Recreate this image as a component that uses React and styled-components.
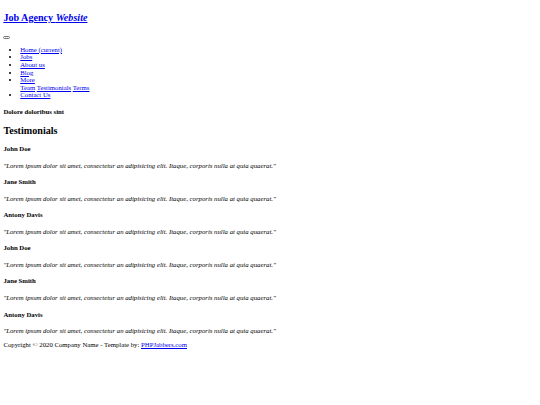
import styled, { createGlobalStyle } from "styled-components";

// the reference is a plain, unstyled page shot at 540/1280 scale
const GlobalStyle = createGlobalStyle`
  html, body {
    background: #fff;
  }
  body {
    margin: 3.375px;
    font-family: "Liberation Serif", "Times New Roman", serif;
    font-size: 6.75px;
    line-height: 1.125;
    color: #000;
  }
  a {
    color: #0000ee;
  }
`;

const Nav = styled.nav``;

const Brand = styled.a`
  display: block;
  color: #0000ee;
`;

const BrandTitle = styled.h2`
  margin: 0.83em 0;
`;

const TogglerRow = styled.div``;

const Toggler = styled.button`
  display: inline-block;
  vertical-align: baseline;
  width: 7px;
  height: 2.6px;
  padding: 0;
  border: 0.8px solid #767676;
  border-radius: 1.5px;
  background: #efefef;
`;

const NavList = styled.ul`
  margin: 1em 0;
  padding-left: 16.875px;
`;

const NavItem = styled.li``;

const SubMenu = styled.div``;

const PageHeading = styled.section``;

const Kicker = styled.h4`
  margin: 1.33em 0;
`;

const Heading = styled.h2`
  margin: 0.83em 0;
`;

const Name = styled.h4`
  margin: 1.33em 0;
`;

const Quote = styled.p`
  margin: 1em 0;
  font-style: italic;
`;

const Footer = styled.footer`
  p {
    margin: 1em 0;
  }
`;

const people = [
  "John Doe",
  "Jane Smith",
  "Antony Davis",
  "John Doe",
  "Jane Smith",
  "Antony Davis",
];

const quote =
  "\"Lorem ipsum dolor sit amet, consectetur an adipisicing elit. Itaque, corporis nulla at quia quaerat.\"";

const App = () => {
  return (
    <>
      <GlobalStyle />
      <Nav>
        <Brand href="#">
          <BrandTitle>
            Job Agency <em>Website</em>
          </BrandTitle>
        </Brand>
        <TogglerRow>
          <Toggler type="button" aria-label="Toggle navigation" />
        </TogglerRow>
        <NavList>
          <NavItem>
            <a href="#">Home (current)</a>
          </NavItem>
          <NavItem>
            <a href="#">Jobs</a>
          </NavItem>
          <NavItem>
            <a href="#">About us</a>
          </NavItem>
          <NavItem>
            <a href="#">Blog</a>
          </NavItem>
          <NavItem>
            <a href="#">More</a>
            <SubMenu>
              <a href="#">Team</a> <a href="#">Testimonials</a>{" "}
              <a href="#">Terms</a>
            </SubMenu>
          </NavItem>
          <NavItem>
            <a href="#">Contact Us</a>
          </NavItem>
        </NavList>
      </Nav>
      <PageHeading>
        <Kicker>Dolore doloribus sint</Kicker>
        <Heading>Testimonials</Heading>
      </PageHeading>
      {people.map((name, i) => (
        <div key={i}>
          <Name>{name}</Name>
          <Quote>{quote}</Quote>
        </div>
      ))}
      <Footer>
        <p>
          Copyright © 2020 Company Name - Template by:{" "}
          <a href="#">PHPJabbers.com</a>
        </p>
      </Footer>
    </>
  );
};

export default App;
